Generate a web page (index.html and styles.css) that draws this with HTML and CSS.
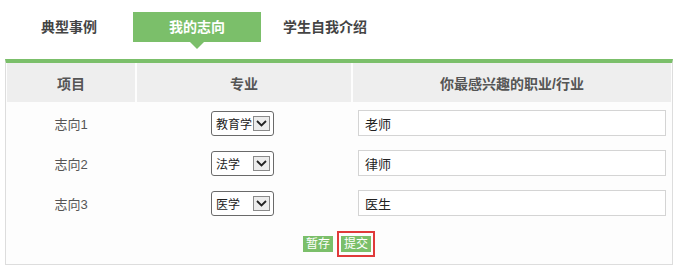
FILE: index.html
```html
<!DOCTYPE html>
<html lang="zh-CN">
<head>
    <meta charset="UTF-8">
    <meta name="viewport" content="width=device-width, initial-scale=1.0">
    <title>我的志向</title>
    <link rel="stylesheet" href="styles.css">
</head>
<body>
    <!-- Tabs -->
    <div class="tabs">
        <div class="tab">典型事例</div>
        <div class="tab active">我的志向</div>
        <div class="tab">学生自我介绍</div>
    </div>

    <!-- Panel with the form table -->
    <div class="panel">
        <div class="grid">
            <div class="th">项目</div>
            <div class="th">专业</div>
            <div class="th">你最感兴趣的职业/行业</div>

            <div class="td">志向1</div>
            <div class="td"><div class="select"><span class="select-text">教育学</span><span class="select-arrow"><svg width="11" height="7" viewBox="0 0 11 7"><path d="M1 1 L5.5 5.5 L10 1" fill="none" stroke="#222" stroke-width="1.8"/></svg></span></div></div>
            <div class="td"><input class="field" type="text" value="老师"></div>

            <div class="td">志向2</div>
            <div class="td"><div class="select"><span class="select-text">法学</span><span class="select-arrow"><svg width="11" height="7" viewBox="0 0 11 7"><path d="M1 1 L5.5 5.5 L10 1" fill="none" stroke="#222" stroke-width="1.8"/></svg></span></div></div>
            <div class="td"><input class="field" type="text" value="律师"></div>

            <div class="td">志向3</div>
            <div class="td"><div class="select"><span class="select-text">医学</span><span class="select-arrow"><svg width="11" height="7" viewBox="0 0 11 7"><path d="M1 1 L5.5 5.5 L10 1" fill="none" stroke="#222" stroke-width="1.8"/></svg></span></div></div>
            <div class="td"><input class="field" type="text" value="医生"></div>
        </div>

        <div class="actions">
            <button class="btn" type="button">暂存</button>
            <span class="highlight"><button class="btn" type="button">提交</button></span>
        </div>
    </div>
</body>
</html>
```

FILE: styles.css
```css
/* General page */
body {
    margin: 0;
    font-family: "Liberation Sans", "Noto Sans CJK SC", sans-serif;
    color: #555;
    background: #fff;
}

/* Tabs */
.tabs {
    display: flex;
    padding: 12px 0 0 5px;
    height: 59px;
    box-sizing: border-box;
}

.tab {
    position: relative;
    width: 128px;
    height: 30px;
    line-height: 30px;
    text-align: center;
    font-size: 14px;
    font-weight: bold;
    color: #444;
}

.tab.active {
    background: #7bbf6a;
    color: #fff;
}

/* Little pointer under the active tab */
.tab.active::after {
    content: "";
    position: absolute;
    left: 57px;
    top: 30px;
    border-left: 7px solid transparent;
    border-right: 7px solid transparent;
    border-top: 7px solid #7bbf6a;
}

/* Panel */
.panel {
    margin-left: 5px;
    width: 668px;
    height: 206px;
    box-sizing: border-box;
    border: 1px solid #ddd;
    border-top: 4px solid #7bbf6a;
    background: #fdfdfd;
}

.grid {
    display: grid;
    grid-template-columns: 128px 214px 1fr;
    grid-auto-rows: 40px;
    column-gap: 2px;
    padding: 0 1px 0 1px;
}

.th {
    background: #eeeeee;
    font-size: 14px;
    font-weight: bold;
    color: #555;
    display: flex;
    align-items: center;
    justify-content: center;
    margin-bottom: 1px;
}

.td {
    display: flex;
    align-items: center;
    justify-content: center;
    font-size: 13px;
    color: #555;
}

/* Fake dropdowns */
.select {
    display: flex;
    align-items: center;
    justify-content: space-between;
    width: 63px;
    height: 25px;
    box-sizing: border-box;
    border: 1px solid #6a6a6a;
    border-radius: 3px;
    padding: 0 3px 0 4px;
    background: #fff;
    margin-right: 3px;
}

.select-text {
    font-size: 12px;
    color: #222;
}

.select-arrow {
    width: 17px;
    height: 15px;
    box-sizing: border-box;
    border: 1px solid #8a8a8a;
    background: #ececec;
    display: flex;
    align-items: center;
    justify-content: center;
}

.field {
    width: 308px;
    height: 26px;
    box-sizing: border-box;
    border: 1px solid #d4d4d4;
    padding: 0 6px;
    font-family: inherit;
    font-size: 13px;
    color: #222;
}

/* Buttons */
.actions {
    display: flex;
    align-items: center;
    justify-content: center;
    gap: 4px;
    margin-top: 8px;
}

.btn {
    border: none;
    background: #7bbf6a;
    color: #fff;
    font-family: inherit;
    font-size: 12px;
    height: 16px;
    line-height: 16px;
    padding: 0 3px;
    cursor: pointer;
}

.highlight {
    display: flex;
    border: 2px solid #e03a3a;
    padding: 3px 2px;
}
```
